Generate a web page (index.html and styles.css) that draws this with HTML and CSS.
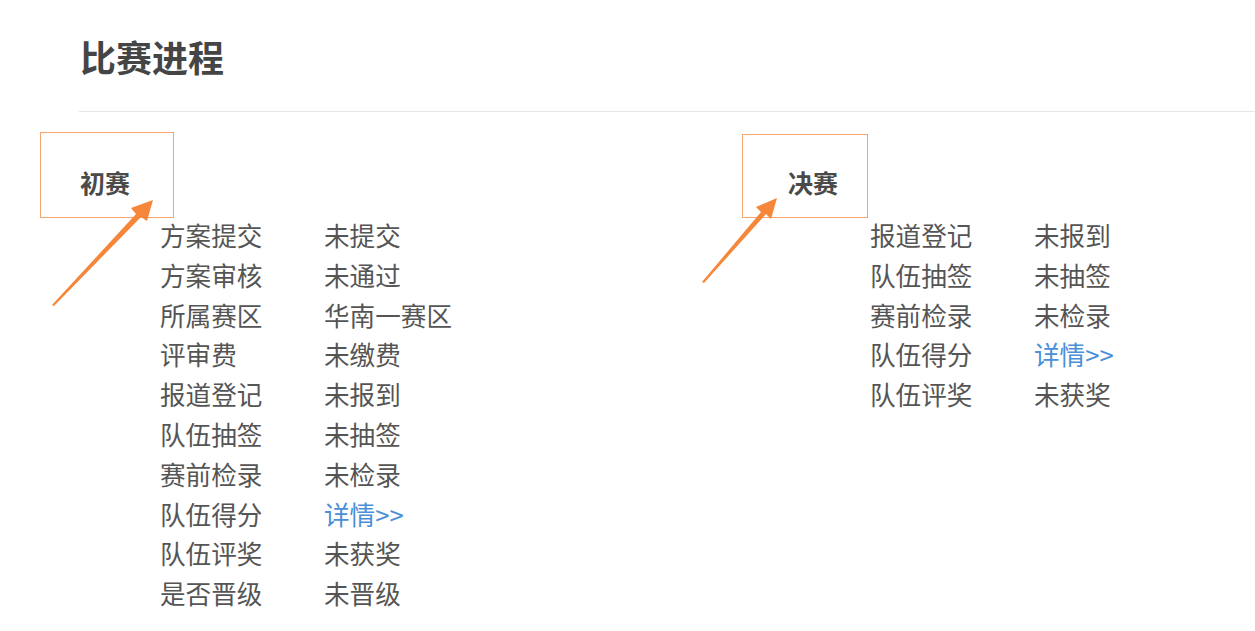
FILE: index.html
```html
<!DOCTYPE html>
<html lang="zh-CN">
<head>
<meta charset="utf-8">
<title>比赛进程</title>
<link rel="stylesheet" href="styles.css">
</head>
<body>
<div class="page">
  <header class="header">
    <h1 class="title">比赛进程</h1>
  </header>
  <div class="stages">
    <section class="stage stage-first">
      <div class="stage-box box-first"><span class="stage-name">初赛</span></div>
      <dl class="rows rows-first">
        <div class="row"><dt>方案提交</dt><dd>未提交</dd></div>
        <div class="row"><dt>方案审核</dt><dd>未通过</dd></div>
        <div class="row"><dt>所属赛区</dt><dd>华南一赛区</dd></div>
        <div class="row"><dt>评审费</dt><dd>未缴费</dd></div>
        <div class="row"><dt>报道登记</dt><dd>未报到</dd></div>
        <div class="row"><dt>队伍抽签</dt><dd>未抽签</dd></div>
        <div class="row"><dt>赛前检录</dt><dd>未检录</dd></div>
        <div class="row"><dt>队伍得分</dt><dd><a class="link" href="#">详情&gt;&gt;</a></dd></div>
        <div class="row"><dt>队伍评奖</dt><dd>未获奖</dd></div>
        <div class="row"><dt>是否晋级</dt><dd>未晋级</dd></div>
      </dl>
    </section>
    <section class="stage stage-final">
      <div class="stage-box box-final"><span class="stage-name">决赛</span></div>
      <dl class="rows rows-final">
        <div class="row"><dt>报道登记</dt><dd>未报到</dd></div>
        <div class="row"><dt>队伍抽签</dt><dd>未抽签</dd></div>
        <div class="row"><dt>赛前检录</dt><dd>未检录</dd></div>
        <div class="row"><dt>队伍得分</dt><dd><a class="link" href="#">详情&gt;&gt;</a></dd></div>
        <div class="row"><dt>队伍评奖</dt><dd>未获奖</dd></div>
      </dl>
    </section>
  </div>
  <svg class="arrows" width="1255" height="631" viewBox="0 0 1255 631">
    <path d="M52 305 L136 214 L131 208 L153 200 L147 221 L141 217 L54 306 Z" fill="#f5863a"/>
    <path d="M702 282 L761 212 L756 207 L777 198 L771 219 L766 214 L704 283 Z" fill="#f5863a"/>
  </svg>
</div>
</body>
</html>
```
FILE: styles.css
```css
html, body {
  margin: 0;
  padding: 0;
  background: #ffffff;
}

body {
  font-family: "Noto Sans CJK SC", "Noto Sans", sans-serif;
  color: #555555;
}

.page {
  position: relative;
  width: 1255px;
  height: 631px;
  overflow: hidden;
}

.header {
  margin-left: 79px;
  padding-top: 38px;
  padding-bottom: 37px;
  border-bottom: 1px solid #e6e6e6;
}

.title {
  margin: 0;
  padding-left: 1px;
  font-size: 36px;
  line-height: 36px;
  font-weight: 700;
  color: #454545;
}

.stages {
  display: flex;
  padding-left: 40px;
  margin-top: 20px;
}

.stage-first {
  width: 702px;
}

.stage-final {
  margin-top: 2px;
}

.stage-box {
  box-sizing: border-box;
  border: 1px solid #f5a56c;
}

.box-first {
  width: 134px;
  height: 86px;
  padding-left: 39px;
  padding-top: 37px;
}

.box-final {
  width: 126px;
  height: 84px;
  padding-left: 45px;
  padding-top: 35px;
}

.stage-name {
  display: block;
  font-size: 25px;
  line-height: 25px;
  font-weight: 700;
  color: #4a4a4a;
}

.rows {
  margin: -3px 0 0 0;
  font-size: 25.6px;
  line-height: 39.8px;
}

.rows-first {
  padding-left: 120px;
}

.rows-final {
  padding-left: 128px;
}

.row {
  display: flex;
}

.row dt {
  width: 164px;
  margin: 0;
}

.row dd {
  margin: 0;
}

.link {
  color: #4a8fd8;
  text-decoration: none;
}

.arrows {
  position: absolute;
  left: 0;
  top: 0;
  pointer-events: none;
}
```
